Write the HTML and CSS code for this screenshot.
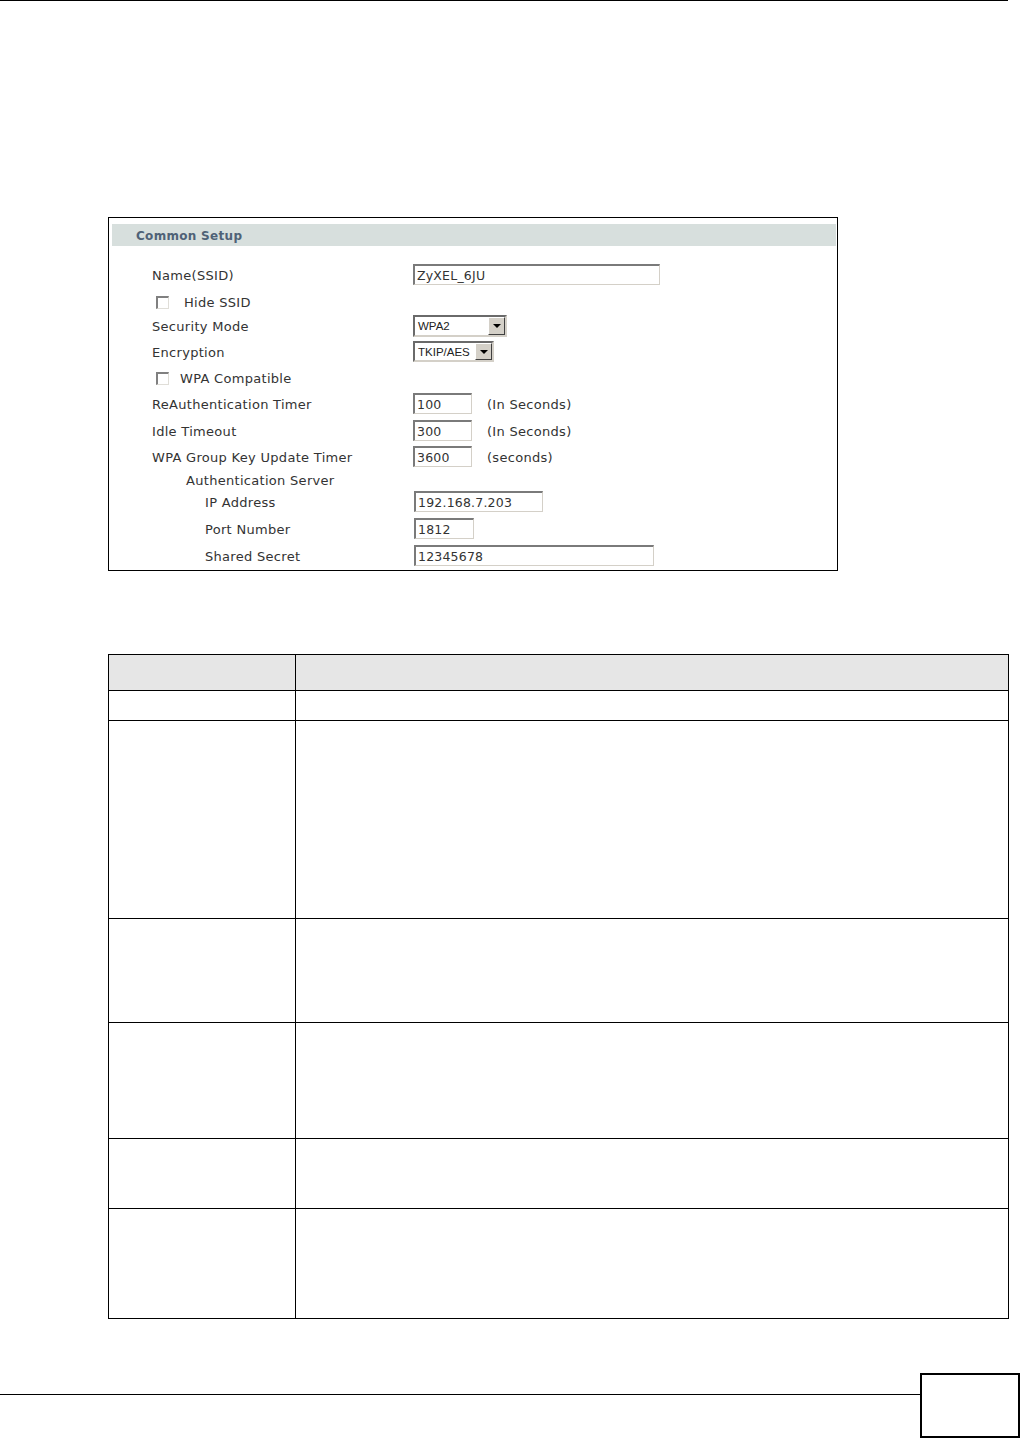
FILE: index.html
```html
<!DOCTYPE html>
<html lang="en">
<head>
    <meta charset="UTF-8">
    <meta name="viewport" content="width=device-width, initial-scale=1.0">
    <title>Common Setup</title>
    <link rel="stylesheet" href="styles.css">
</head>
<body>
    <div class="top-rule"></div>

    <div class="figure">
        <div class="figure-title">Common Setup</div>
        <div class="form">
            <div class="row h28">
                <div class="label">Name(SSID)</div>
                <input class="field w-name" type="text" value="ZyXEL_6JU">
            </div>
            <div class="row h23">
                <div class="label check-line">
                    <span class="checkbox"></span>
                    <span class="check-text wide">Hide SSID</span>
                </div>
            </div>
            <div class="row h26">
                <div class="label">Security Mode</div>
                <div class="select w-mode">
                    <span class="select-text">WPA2</span>
                    <span class="select-btn"><span class="arrow"></span></span>
                </div>
            </div>
            <div class="row h27">
                <div class="label">Encryption</div>
                <div class="select w-enc">
                    <span class="select-text">TKIP/AES</span>
                    <span class="select-btn"><span class="arrow"></span></span>
                </div>
            </div>
            <div class="row h25">
                <div class="label check-line">
                    <span class="checkbox"></span>
                    <span class="check-text">WPA Compatible</span>
                </div>
            </div>
            <div class="row h27">
                <div class="label">ReAuthentication Timer</div>
                <input class="field w-short" type="text" value="100">
                <span class="unit">(In Seconds)</span>
            </div>
            <div class="row h26">
                <div class="label">Idle Timeout</div>
                <input class="field w-short" type="text" value="300">
                <span class="unit">(In Seconds)</span>
            </div>
            <div class="row h23">
                <div class="label">WPA Group Key Update Timer</div>
                <input class="field w-short" type="text" value="3600">
                <span class="unit">(seconds)</span>
            </div>
            <div class="row h22">
                <div class="label indent-1">Authentication Server</div>
            </div>
            <div class="row h27 sub">
                <div class="label indent-2">IP Address</div>
                <input class="field w-ip" type="text" value="192.168.7.203">
            </div>
            <div class="row h27 sub">
                <div class="label indent-2">Port Number</div>
                <input class="field w-port" type="text" value="1812">
            </div>
            <div class="row h26 sub">
                <div class="label indent-2">Shared Secret</div>
                <input class="field w-secret" type="text" value="12345678">
            </div>
        </div>
    </div>

    <table class="fields">
        <tr class="head"><th class="col-label"></th><th></th></tr>
        <tr class="r30"><td></td><td></td></tr>
        <tr class="r198"><td></td><td></td></tr>
        <tr class="r104"><td></td><td></td></tr>
        <tr class="r116"><td></td><td></td></tr>
        <tr class="r70"><td></td><td></td></tr>
        <tr class="r110"><td></td><td></td></tr>
    </table>

    <div class="footer">
        <div class="footer-line"></div>
        <div class="page-box"></div>
    </div>
</body>
</html>
```

FILE: styles.css
```css
body {
    margin: 0;
    background-color: #fff;
    font-family: "DejaVu Sans", Verdana, sans-serif;
}

.top-rule {
    width: 1008px;
    border-top: 1px solid #000;
}

.figure {
    box-sizing: border-box;
    width: 730px;
    height: 354px;
    margin: 216px 0 0 108px;
    padding: 6px 1px 0 3px;
    border: 1px solid #000;
}
.figure-title {
    height: 20px;
    line-height: 20px;
    padding: 2px 0 0 24px;
    background-color: #d7dfdd;
    color: #4f6277;
    font-size: 12px;
    font-weight: bold;
    letter-spacing: 0.3px;
}

.form {
    margin-top: 16px;
    padding-left: 40px;
    color: #333;
    font-size: 13px;
    letter-spacing: 0.3px;
}
.row {
    display: flex;
    align-items: flex-start;
}
.h22 { height: 22px; }
.h23 { height: 23px; }
.h25 { height: 25px; }
.h26 { height: 26px; }
.h27 { height: 27px; }
.h28 { height: 28px; }

.label {
    flex: 0 0 261px;
    box-sizing: border-box;
    height: 26px;
    line-height: 28px;
    white-space: nowrap;
}
.indent-1 { padding-left: 34px; }
.indent-2 { padding-left: 53px; }
.sub .field { margin-left: 1px; }

.check-line {
    display: flex;
    align-items: center;
    padding-left: 4px;
}
.checkbox {
    box-sizing: border-box;
    width: 13px;
    height: 13px;
    margin-top: -1px;
    border-top: 2px solid #808080;
    border-left: 2px solid #808080;
    border-right: 1px solid #e0ded8;
    border-bottom: 1px solid #e0ded8;
    background-color: #fff;
}
.check-text {
    margin-left: 11px;
    line-height: 28px;
}
.check-text.wide {
    margin-left: 15px;
}

.field {
    box-sizing: border-box;
    height: 21px;
    margin: 2px 0 0 0;
    padding: 0 2px;
    border-top: 2px solid #7a7a7a;
    border-left: 2px solid #7a7a7a;
    border-right: 1px solid #d4d0c8;
    border-bottom: 1px solid #d4d0c8;
    background-color: #fff;
    color: #333;
    font-family: "DejaVu Sans", Verdana, sans-serif;
    font-size: 12.5px;
    letter-spacing: 0.2px;
    outline: none;
}
.w-name { width: 247px; }
.w-short { width: 59px; }
.w-ip { width: 129px; }
.w-port { width: 60px; }
.w-secret { width: 240px; }

.unit {
    margin-left: 15px;
    line-height: 28px;
}

.select {
    box-sizing: border-box;
    display: flex;
    align-items: center;
    height: 22px;
    margin-top: 2px;
    border-top: 2px solid #6a6a6a;
    border-left: 2px solid #6a6a6a;
    border-right: 2px solid #d4d0c8;
    border-bottom: 2px solid #d4d0c8;
    background-color: #fff;
}
.w-mode { width: 94px; }
.w-enc { width: 81px; height: 21px; }
.select-text {
    flex: 1;
    padding-left: 3px;
    font-family: "Liberation Sans", Arial, sans-serif;
    font-size: 11.5px;
    letter-spacing: 0;
    color: #222;
}
.select-btn {
    box-sizing: border-box;
    display: flex;
    align-items: center;
    justify-content: center;
    width: 17px;
    height: 100%;
    background-color: #d4d0c8;
    border-top: 1px solid #fff;
    border-left: 1px solid #fff;
    border-right: 1px solid #404040;
    border-bottom: 1px solid #404040;
}
.arrow {
    width: 0;
    height: 0;
    border-left: 4px solid transparent;
    border-right: 4px solid transparent;
    border-top: 4px solid #000;
}

.fields {
    width: 901px;
    margin: 83px 0 0 108px;
    border-collapse: collapse;
}
.fields th,
.fields td {
    padding: 0;
    border: 1px solid #000;
}
.fields .head {
    height: 36px;
    background-color: #e6e6e6;
}
.col-label { width: 186px; }
.r30 { height: 30px; }
.r198 { height: 198px; }
.r104 { height: 104px; }
.r116 { height: 116px; }
.r70 { height: 70px; }
.r110 { height: 110px; }

.footer {
    display: flex;
    align-items: flex-start;
    margin-top: 54px;
}
.footer-line {
    flex: 0 0 920px;
    margin-top: 21px;
    border-top: 1px solid #000;
}
.page-box {
    box-sizing: border-box;
    width: 100px;
    height: 65px;
    border: 2px solid #000;
}
```
